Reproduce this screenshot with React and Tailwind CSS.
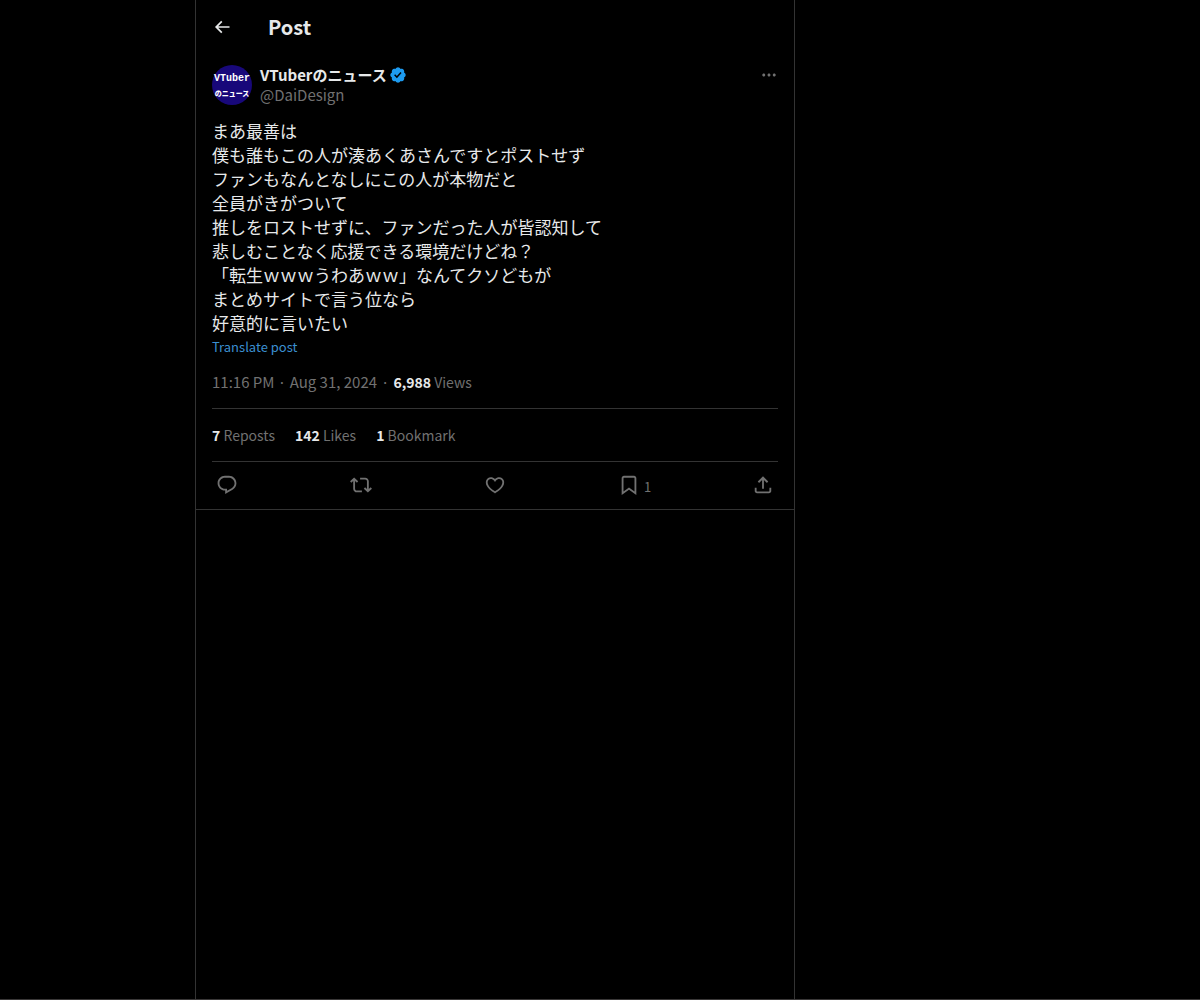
const icons = {
  back: 'M7.414 13l5.043 5.04-1.414 1.42L3.586 12l7.457-7.46 1.414 1.42L7.414 11H21v2H7.414z',
  more: 'M3 12c0-1.1.9-2 2-2s2 .9 2 2-.9 2-2 2-2-.9-2-2zm9 2c1.1 0 2-.9 2-2s-.9-2-2-2-2 .9-2 2 .9 2 2 2zm7 0c1.1 0 2-.9 2-2s-.9-2-2-2-2 .9-2 2 .9 2 2 2z',
  reply: 'M1.751 10c0-4.42 3.584-8 8.005-8h4.366c4.49 0 8.129 3.64 8.129 8.13 0 2.96-1.607 5.68-4.196 7.11l-8.054 4.46v-3.69h-.067c-4.49.1-8.183-3.51-8.183-8.01zm8.005-6c-3.317 0-6.005 2.69-6.005 6 0 3.37 2.77 6.08 6.138 6.01l.351-.01h1.761v2.3l5.087-2.81c1.951-1.08 3.163-3.13 3.163-5.36 0-3.39-2.744-6.13-6.129-6.13H9.756z',
  repost: 'M4.5 3.88l4.432 4.14-1.364 1.46L5.5 7.55V16c0 1.1.896 2 2 2H13v2H7.5c-2.209 0-4-1.79-4-4V7.55L1.432 9.48.068 8.02 4.5 3.88zM16.5 6H11V4h5.5c2.209 0 4 1.79 4 4v8.45l2.068-1.93 1.364 1.46-4.432 4.14-4.432-4.14 1.364-1.46 2.068 1.93V8c0-1.1-.896-2-2-2z',
  like: 'M16.697 5.5c-1.222-.06-2.679.51-3.89 2.16l-.805 1.09-.806-1.09C9.984 6.01 8.526 5.44 7.304 5.5c-1.243.07-2.349.78-2.91 1.91-.552 1.12-.633 2.78.479 4.82 1.074 1.97 3.257 4.27 7.129 6.61 3.87-2.34 6.052-4.64 7.126-6.61 1.111-2.04 1.03-3.7.477-4.82-.561-1.13-1.666-1.84-2.908-1.91zm4.187 7.69c-1.351 2.48-4.001 5.12-8.379 7.67l-.503.3-.504-.3c-4.379-2.55-7.029-5.19-8.382-7.67-1.36-2.5-1.41-4.86-.514-6.67.887-1.79 2.647-2.91 4.601-3.01 1.651-.09 3.368.56 4.798 2.01 1.429-1.45 3.146-2.1 4.796-2.01 1.954.1 3.714 1.22 4.601 3.01.896 1.81.846 4.17-.514 6.67z',
  bookmark: 'M4 4.5C4 3.12 5.119 2 6.5 2h11C18.881 2 20 3.12 20 4.5v18.44l-8-5.71-8 5.71V4.5zM6.5 4c-.276 0-.5.22-.5.5v14.56l6-4.29 6 4.29V4.5c0-.28-.224-.5-.5-.5h-11z',
  share: 'M12 2.59l5.7 5.7-1.41 1.42L13 6.41V16h-2V6.41l-3.3 3.3-1.41-1.42L12 2.59zM21 15l-.02 3.51c0 1.38-1.12 2.49-2.5 2.49H5.5C4.11 21 3 19.88 3 18.5V15h2v3.5c0 .28.22.5.5.5h12.98c.28 0 .5-.22.5-.5L19 15h2z',
}

const lines = [
  'まあ最善は',
  '僕も誰もこの人が湊あくあさんですとポストせず',
  'ファンもなんとなしにこの人が本物だと',
  '全員がきがついて',
  '推しをロストせずに、ファンだった人が皆認知して',
  '悲しむことなく応援できる環境だけどね？',
  '「転生ｗｗｗうわあｗｗ」なんてクソどもが',
  'まとめサイトで言う位なら',
  '好意的に言いたい',
]

const stats = [
  { count: '7', label: 'Reposts' },
  { count: '142', label: 'Likes' },
  { count: '1', label: 'Bookmark' },
]

const actions = [
  { icon: 'reply', label: 'Reply' },
  { icon: 'repost', label: 'Repost' },
  { icon: 'like', label: 'Like' },
  { icon: 'bookmark', label: 'Bookmark', count: 1 },
  { icon: 'share', label: 'Share' },
]

function Icon({ name, className }) {
  return (
    <svg viewBox="0 0 24 24" fill="currentColor" aria-hidden="true" className={className}>
      <path d={icons[name]} />
    </svg>
  )
}

function VerifiedBadge() {
  return (
    <svg viewBox="0 0 22 22" role="img" aria-label="Verified account" className="size-[18px] shrink-0 text-[#1d9bf0]" fill="currentColor">
      <path d="M20.396 11c-.018-.646-.215-1.275-.57-1.816-.354-.54-.852-.972-1.438-1.246.223-.607.27-1.264.14-1.897-.131-.634-.437-1.218-.882-1.687-.47-.445-1.053-.75-1.687-.882-.633-.13-1.29-.083-1.897.14-.273-.587-.704-1.086-1.245-1.44S11.647 1.62 11 1.604c-.646.017-1.273.213-1.813.568s-.969.854-1.24 1.44c-.608-.223-1.267-.272-1.902-.14-.635.13-1.22.436-1.69.882-.445.47-.749 1.055-.878 1.688-.13.633-.08 1.29.144 1.896-.587.274-1.087.705-1.443 1.245-.356.54-.555 1.17-.574 1.817.02.647.218 1.276.574 1.817.356.54.856.972 1.443 1.245-.224.606-.274 1.263-.144 1.896.13.634.433 1.218.877 1.688.47.443 1.054.747 1.687.878.633.132 1.29.084 1.897-.136.274.586.705 1.084 1.246 1.439.54.354 1.17.551 1.816.569.647-.016 1.276-.213 1.817-.567s.972-.854 1.245-1.44c.604.239 1.266.296 1.903.164.636-.132 1.22-.447 1.68-.907.46-.46.776-1.044.908-1.681s.075-1.299-.165-1.903c.586-.274 1.084-.705 1.439-1.246.354-.54.551-1.17.569-1.816zM9.662 14.85l-3.429-3.428 1.293-1.302 2.072 2.072 4.4-4.794 1.347 1.246z" />
    </svg>
  )
}

function Avatar() {
  return (
    <a href="#" className="flex size-10 shrink-0 flex-col items-center justify-center rounded-full bg-[#18087a] font-bold whitespace-nowrap text-white">
      <span className="font-['Liberation_Mono',monospace] text-[10px] leading-4">VTuber</span>
      <span className="text-[7px] leading-3 font-black">のニュース</span>
    </a>
  )
}

export default function App() {
  return (
    <div className="grid min-h-screen grid-cols-[195fr_minmax(0,600px)_405fr] border-b border-[#3a3838] bg-black font-['Noto_Sans_CJK_JP',sans-serif] text-[15px] leading-5 text-[#717171]">
      <main className="col-start-2 border-x border-[#333]">
        <header className="flex h-[53px] items-center gap-9 px-4">
          <button aria-label="Back" className="text-[#e7e9ea]">
            <Icon name="back" className="size-5" />
          </button>
          <h1 className="text-xl leading-6 font-bold text-[#e7e9ea]">Post</h1>
        </header>

        <article className="border-b border-[#333] px-4 pt-3">
          {/* Author */}
          <div className="flex items-start gap-2">
            <Avatar />
            <div className="min-w-0 flex-1">
              <div className="flex items-center gap-0.5">
                <a href="#" className="font-bold text-[#e7e9ea]">VTuberのニュース</a>
                <VerifiedBadge />
              </div>
              <a href="#" className="block">@DaiDesign</a>
            </div>
            <button aria-label="More" className="flex h-5 items-center">
              <Icon name="more" className="size-[18px]" />
            </button>
          </div>

          {/* Post text */}
          <div className="mt-[14px] text-[17px] leading-6 text-[#e7e9ea]">
            {lines.map((line) => (
              <p key={line}>{line}</p>
            ))}
          </div>
          <button className="mt-0.5 block text-[13px] leading-5 text-[#3b8fd0]">Translate post</button>

          <div className="flex gap-1 pt-[15px] pb-4">
            <a href="#">11:16 PM · Aug 31, 2024</a>
            <span>·</span>
            <span className="text-sm leading-5">
              <strong className="text-[#e7e9ea]">6,988</strong> Views
            </span>
          </div>

          <div className="flex gap-5 border-y border-[#333] py-4 text-sm leading-5">
            {stats.map(({ count, label }) => (
              <a key={label} href="#">
                <strong className="text-[#e7e9ea]">{count}</strong> {label}
              </a>
            ))}
          </div>

          {/* Actions */}
          <div className="grid grid-cols-[repeat(4,1fr)_auto] px-1 pt-3 pb-[13px]">
            {actions.map(({ icon, label, count }) => (
              <button key={label} aria-label={label} className="flex items-center gap-1">
                <Icon name={icon} className="size-[22px]" />
                {count && <span className="pt-1 text-[13px] leading-4">{count}</span>}
              </button>
            ))}
          </div>
        </article>
      </main>
    </div>
  )
}
